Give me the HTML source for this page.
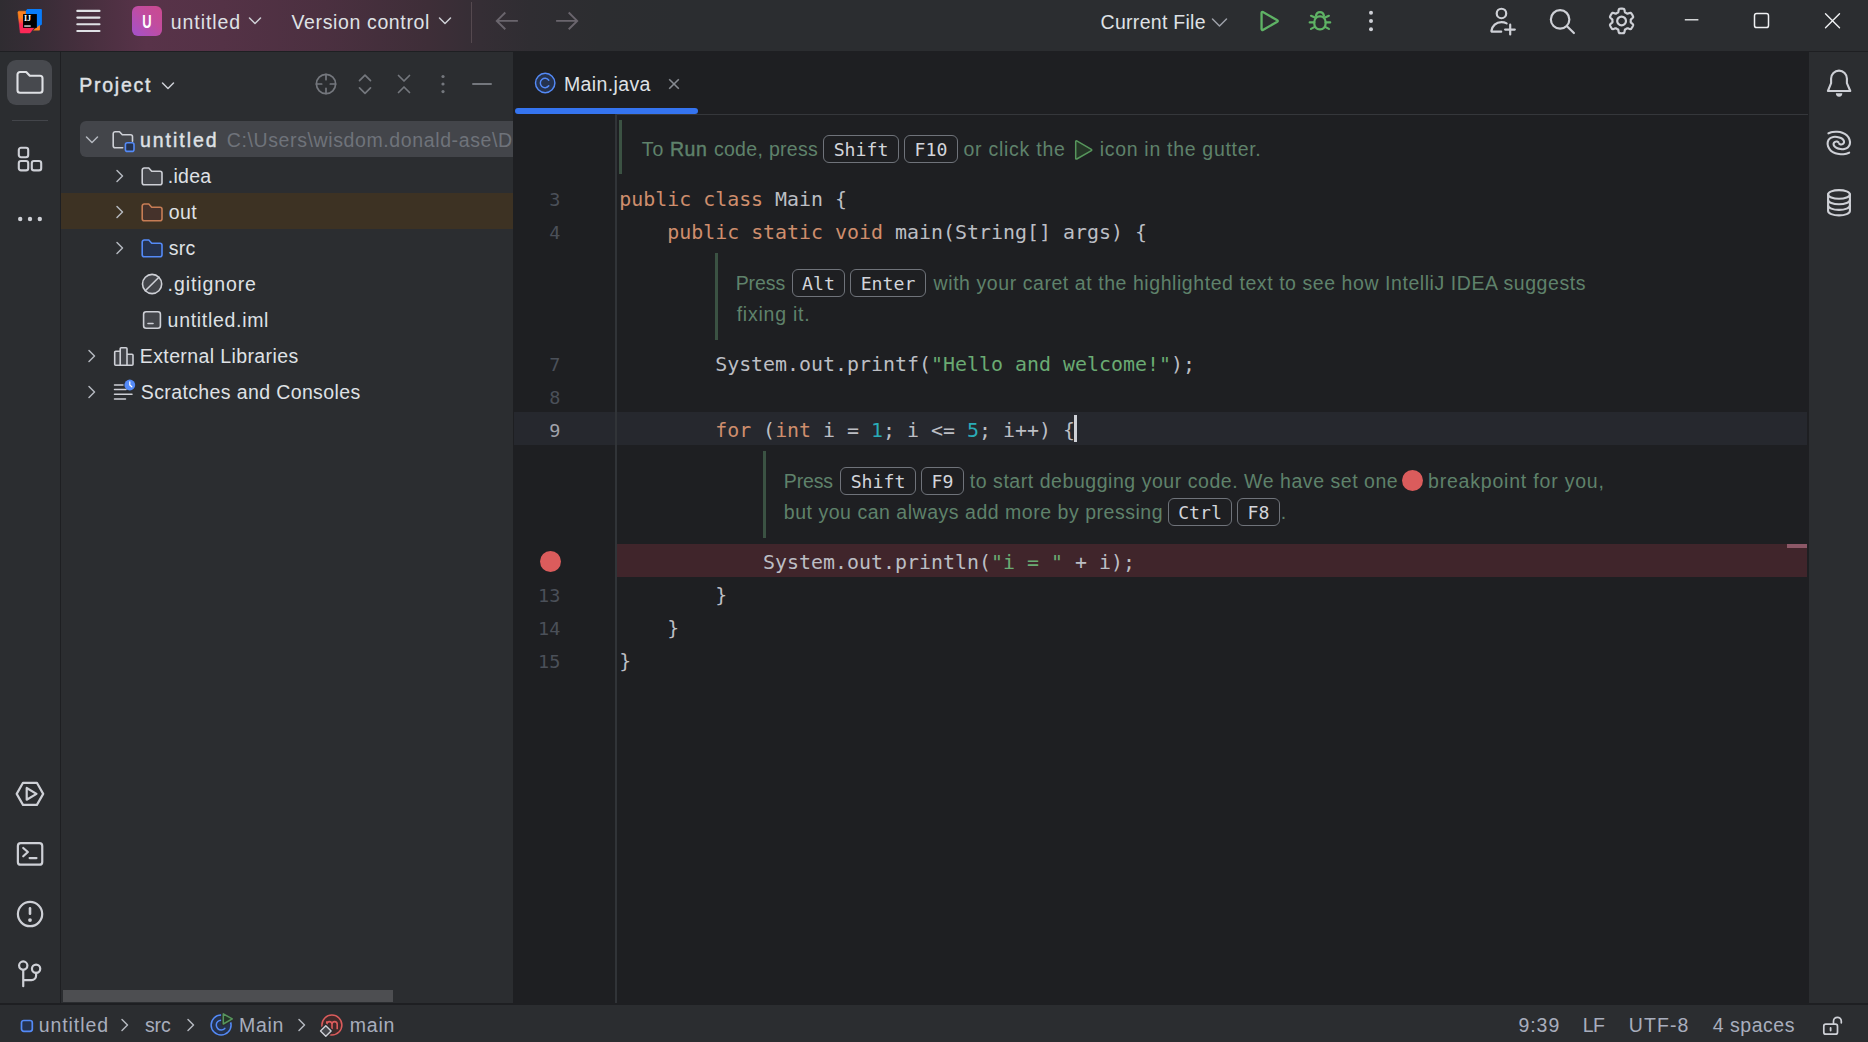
<!DOCTYPE html>
<html lang="en">
<head>
<meta charset="utf-8">
<title>untitled – Main.java</title>
<style>
*{box-sizing:border-box;margin:0;padding:0}
html,body{width:1868px;height:1042px;overflow:hidden;background:#1E1F22}
body{position:relative;font-family:"Liberation Sans",sans-serif;font-size:19.5px;color:#DFE1E5;-webkit-font-smoothing:antialiased}
.abs{position:absolute}
.t{position:absolute;white-space:pre;line-height:24px;height:24px}
svg{position:absolute;overflow:visible}
.ic{fill:none;stroke:#CED0D6;stroke-width:1.5;stroke-linecap:round;stroke-linejoin:round}
/* panels */
#titlebar{left:0;top:0;width:1868px;height:51px;background:#2B2D30}
#titlegrad{left:0;top:0;width:700px;height:51px;background:linear-gradient(90deg,#2F2C31 0px,#392D37 43px,#472F3E 86px,#583349 146px,#543246 223px,#4B3040 326px,#3E2E38 428px,#352E35 480px,#2F2D32 531px,#2C2D30 600px,#2B2D30 680px)}
#leftstrip{left:0;top:52px;width:60px;height:951px;background:#2B2D30}
#project{left:61px;top:52px;width:452px;height:951px;background:#2B2D30}
#rightstrip{left:1809px;top:52px;width:59px;height:951px;background:#2B2D30}
#statusbar{left:0;top:1005px;width:1868px;height:37px;background:#2B2D30}
#editor{left:514px;top:52px;width:1294px;height:951px;background:#1E1F22}
/* code */
.code{font-family:"DejaVu Sans Mono","Liberation Mono",monospace;font-size:19.93px;line-height:33px;height:33px;position:absolute;white-space:pre;color:#BCBEC4;left:619.2px;margin-top:0px}
.kw{color:#CF8E6D}.st{color:#6AAB73}.nu{color:#2AACB8}
.ln{font-family:"DejaVu Sans Mono","Liberation Mono",monospace;font-size:18.5px;line-height:33px;height:33px;position:absolute;color:#4B5059;text-align:right;width:40px;left:520.3px;margin-top:.5px}
.doc{position:absolute;white-space:pre;color:#5F826B;font-size:19.5px;line-height:31px;height:31px}
.kbd{position:absolute;text-align:center;font-family:"DejaVu Sans Mono","Liberation Mono",monospace;font-size:18.2px;color:#D3D5DB;border:1.5px solid #6F737A;border-radius:6px;height:28px;line-height:27.6px}
.docbar{position:absolute;width:3px;background:#3B5243}
.sb{color:#A8ADBD}
</style>
</head>
<body>
<!-- ===== panels ===== -->
<div class="abs" id="titlebar"></div>
<div class="abs" id="titlegrad"></div>
<div class="abs" id="leftstrip"></div>
<div class="abs" id="project"></div>
<div class="abs" id="editor"></div>
<div class="abs" id="rightstrip"></div>
<div class="abs" id="statusbar"></div>

<!-- ===== TITLEBAR ===== -->
<!--TITLEBAR-->
<!-- logo -->
<svg style="left:10px;top:1px" width="40" height="40" viewBox="10 1 40 40">
  <defs><linearGradient id="lgA" x1="0" y1="0" x2="0" y2="1"><stop offset="0" stop-color="#FC801D"/><stop offset=".3" stop-color="#FC801D"/><stop offset=".62" stop-color="#FE2857"/><stop offset="1" stop-color="#FE2857"/></linearGradient></defs>
  <path d="M27.300 9H41a.9 .9 0 0 1 .9.900V24.400L36.500 28 25.500 21V11z" fill="#087CFA"/>
  <path d="M18.700 11.200H25.500V27.500H34.200L30 32.900H20.300L17.900 12z" fill="url(#lgA)" stroke="url(#lgA)" stroke-width=".6" stroke-linejoin="round"/>
  <path d="M39.900 25V29.800a.8 .8 0 0 1-.8.800H33L36.500 27.500z" fill="#FC801D"/>
  <rect x="23.050" y="14.050" width="13.820" height="13.820" fill="#000"/>
  <text x="23.900" y="21" font-family="Liberation Serif, serif" font-size="8.200" font-weight="bold" fill="#fff" textLength="7.200" lengthAdjust="spacingAndGlyphs">IJ</text>
  <rect x="24.200" y="25.200" width="6.500" height="1.700" fill="#B8B8B8"/>
</svg>
<!-- hamburger -->
<svg style="left:68px;top:1px" width="40" height="40" viewBox="68 1 40 40" class="ic"><path d="M77.300 10.900H99.500M77.300 17.600H99.500M77.300 24.300H99.500M77.300 31.050H99.500" stroke="#DFE1E5" stroke-width="2.100"/></svg>
<!-- project badge -->
<div class="abs" style="left:132px;top:6px;width:30px;height:30px;border-radius:6px;background:linear-gradient(45deg,#A352CC 0%,#C24C9E 60%,#CB4A8E 100%)"></div>
<div class="t" id="tU" style="left:132px;top:10.300px;width:30px;text-align:center;color:#fff;font-size:19px;font-weight:bold;transform:scaleX(.68);transform-origin:14.700px 50%">U</div>
<div class="t" id="t_untitled" style="left:170.8px;letter-spacing:0.924px;top:10px">untitled</div>
<svg style="left:248px;top:16px" width="14" height="10" viewBox="0 0 14 10" class="ic"><path d="M1.5 2l5.5 5.5L12.5 2"/></svg>
<div class="t" id="t_vc" style="left:291.5px;letter-spacing:0.632px;top:10px">Version control</div>
<svg style="left:438px;top:16px" width="14" height="10" viewBox="0 0 14 10" class="ic"><path d="M1.5 2l5.5 5.5L12.5 2"/></svg>
<div class="abs" style="left:470.800px;top:1.500px;width:1.500px;height:41px;background:#55494F"></div>
<!-- back / forward -->
<svg style="left:480px;top:0px" width="120" height="44" viewBox="480 0 120 44" class="ic"><path d="M517.900 20.900H497M505.300 12.500L496.800 20.900 505.300 29.300M556.100 20.900H577M568.700 12.500L577.200 20.900 568.700 29.300" stroke="#6A656D" stroke-width="1.900" stroke-linecap="butt" stroke-linejoin="miter"/></svg>
<!-- current file -->
<div class="t" id="t_cf" style="left:1100.6px;letter-spacing:0.28px;top:10px">Current File</div>
<svg style="left:1211px;top:17px" width="17" height="11" viewBox="0 0 17 11" class="ic"><path d="M1.5 2l7 7 7-7" stroke="#9DA0A8"/></svg>
<!-- run -->
<svg style="left:1250px;top:1px" width="40" height="40" viewBox="1250 1 40 40" class="ic"><path d="M1261.560 12.900V29.100a.9 .9 0 0 0 1.350.780L1277.300 21.800a.9 .9 0 0 0 0-1.600L1262.910 12.120a.9 .9 0 0 0-1.350.780z" stroke="#5FB365" stroke-width="2.300"/></svg>
<!-- debug -->
<svg style="left:1300px;top:1px" width="40" height="40" viewBox="1300 1 40 40" class="ic"><g stroke="#5FB365" stroke-width="2.200"><rect x="1314.300" y="16.300" width="11.300" height="13.100" rx="5.300" ry="5.600"/><path d="M1315.900 16a4.100 4.700 0 0 1 8.100 0"/><path d="M1314.300 17.300L1311 15.800M1325.600 17.300L1328.900 15.800M1314.300 22.400H1309.700M1325.600 22.400H1330.200M1314.300 27.100L1311 28.900M1325.600 27.100L1328.900 28.900"/></g></svg>
<!-- more -->
<svg style="left:1366px;top:9px" width="10" height="24" viewBox="0 0 10 24"><circle cx="5" cy="3.800" r="2" fill="#CED0D6"/><circle cx="5" cy="12" r="2" fill="#CED0D6"/><circle cx="5" cy="20.200" r="2" fill="#CED0D6"/></svg>
<!-- code with me -->
<svg style="left:1482px;top:1px" width="40" height="40" viewBox="1482 1 40 40" class="ic"><g stroke-width="2.200"><circle cx="1501.460" cy="13.480" r="4.750"/><path d="M1506.600 23.400C1505 22.500 1503.300 22.100 1501.400 22.100 1496.200 22.100 1492 25.900 1491.400 31 1491.350 31.400 1491.650 31.700 1492.050 31.700H1501.200"/><path d="M1510.200 24.700V34.400M1505.100 29.600H1514.800"/></g></svg>
<!-- search -->
<svg style="left:1542px;top:1px" width="40" height="40" viewBox="1542 1 40 40" class="ic"><circle cx="1560.100" cy="19.400" r="9.250" stroke-width="2.200"/><path d="M1567 26.300L1573.900 33.050" stroke-width="2.200"/></svg>
<!-- settings -->
<svg style="left:1602px;top:1px" width="40" height="40" viewBox="-19.580 -19.960 40 40" class="ic"><path d="M9.20 0.00L9.20 0.24L9.19 0.48L9.17 0.72L9.15 0.96L9.13 1.20L9.26 1.47L9.56 1.77L9.98 2.12L10.45 2.51L10.91 2.92L11.29 3.34L11.53 3.75L11.59 4.10L11.48 4.41L11.36 4.71L11.24 5.00L11.10 5.30L10.96 5.58L10.81 5.87L10.65 6.15L10.49 6.43L10.32 6.70L10.14 6.97L9.95 7.23L9.76 7.49L9.56 7.74L9.35 7.98L9.01 8.12L8.54 8.10L7.99 7.99L7.40 7.80L6.83 7.59L6.32 7.40L5.90 7.28L5.60 7.30L5.41 7.44L5.21 7.58L5.01 7.72L4.81 7.84L4.60 7.97L4.39 8.09L4.18 8.20L3.96 8.30L3.74 8.40L3.52 8.50L3.36 8.75L3.25 9.17L3.15 9.71L3.05 10.31L2.92 10.91L2.75 11.45L2.52 11.86L2.24 12.09L1.92 12.15L1.61 12.19L1.29 12.23L0.97 12.26L0.64 12.28L0.32 12.30L0.00 12.30L-0.32 12.30L-0.64 12.28L-0.97 12.26L-1.29 12.23L-1.61 12.19L-1.92 12.15L-2.24 12.09L-2.52 11.86L-2.75 11.45L-2.92 10.91L-3.05 10.31L-3.15 9.71L-3.25 9.17L-3.36 8.75L-3.52 8.50L-3.74 8.40L-3.96 8.30L-4.18 8.20L-4.39 8.09L-4.60 7.97L-4.81 7.84L-5.01 7.72L-5.21 7.58L-5.41 7.44L-5.60 7.30L-5.90 7.28L-6.32 7.40L-6.83 7.59L-7.40 7.80L-7.99 7.99L-8.54 8.10L-9.01 8.12L-9.35 7.98L-9.56 7.74L-9.76 7.49L-9.95 7.23L-10.14 6.97L-10.32 6.70L-10.49 6.43L-10.65 6.15L-10.81 5.87L-10.96 5.58L-11.10 5.30L-11.24 5.00L-11.36 4.71L-11.48 4.41L-11.59 4.10L-11.53 3.75L-11.29 3.34L-10.91 2.92L-10.45 2.51L-9.98 2.12L-9.56 1.77L-9.26 1.47L-9.13 1.20L-9.15 0.96L-9.17 0.72L-9.19 0.48L-9.20 0.24L-9.20 0.00L-9.20 -0.24L-9.19 -0.48L-9.17 -0.72L-9.15 -0.96L-9.13 -1.20L-9.26 -1.47L-9.56 -1.77L-9.98 -2.12L-10.45 -2.51L-10.91 -2.92L-11.29 -3.34L-11.53 -3.75L-11.59 -4.10L-11.48 -4.41L-11.36 -4.71L-11.24 -5.00L-11.10 -5.30L-10.96 -5.58L-10.81 -5.87L-10.65 -6.15L-10.49 -6.43L-10.32 -6.70L-10.14 -6.97L-9.95 -7.23L-9.76 -7.49L-9.56 -7.74L-9.35 -7.98L-9.01 -8.12L-8.54 -8.10L-7.99 -7.99L-7.40 -7.80L-6.83 -7.59L-6.32 -7.40L-5.90 -7.28L-5.60 -7.30L-5.41 -7.44L-5.21 -7.58L-5.01 -7.72L-4.81 -7.84L-4.60 -7.97L-4.39 -8.09L-4.18 -8.20L-3.96 -8.30L-3.74 -8.40L-3.52 -8.50L-3.36 -8.75L-3.25 -9.17L-3.15 -9.71L-3.05 -10.31L-2.92 -10.91L-2.75 -11.45L-2.52 -11.86L-2.24 -12.09L-1.92 -12.15L-1.61 -12.19L-1.29 -12.23L-0.97 -12.26L-0.64 -12.28L-0.32 -12.30L-0.00 -12.30L0.32 -12.30L0.64 -12.28L0.97 -12.26L1.29 -12.23L1.61 -12.19L1.92 -12.15L2.24 -12.09L2.52 -11.86L2.75 -11.45L2.92 -10.91L3.05 -10.31L3.15 -9.71L3.25 -9.17L3.36 -8.75L3.52 -8.50L3.74 -8.40L3.96 -8.30L4.18 -8.20L4.39 -8.09L4.60 -7.97L4.81 -7.84L5.01 -7.72L5.21 -7.58L5.41 -7.44L5.60 -7.30L5.90 -7.28L6.32 -7.40L6.83 -7.59L7.40 -7.80L7.99 -7.99L8.54 -8.10L9.01 -8.12L9.35 -7.98L9.56 -7.74L9.76 -7.49L9.95 -7.23L10.14 -6.97L10.32 -6.70L10.49 -6.43L10.65 -6.15L10.81 -5.87L10.96 -5.58L11.10 -5.30L11.24 -5.00L11.36 -4.71L11.48 -4.41L11.59 -4.10L11.53 -3.75L11.29 -3.34L10.91 -2.92L10.45 -2.51L9.98 -2.12L9.56 -1.77L9.26 -1.47L9.13 -1.20L9.15 -0.96L9.17 -0.72L9.19 -0.48L9.20 -0.24Z" stroke-width="2.200"/><circle cx="0" cy="0" r="4.400" stroke-width="2.200"/></svg>
<!-- window controls -->
<svg style="left:1684px;top:12px" width="16" height="16" viewBox="0 0 16 16" class="ic"><path d="M.8 7.800h13.600" stroke="#F0F1F3" stroke-width="1.300" stroke-linecap="butt"/></svg>
<svg style="left:1753px;top:12px" width="17" height="17" viewBox="0 0 17 17" class="ic"><rect x="1.500" y="1.600" width="14" height="14" rx="2.200" stroke="#F0F1F3" stroke-width="1.500"/></svg>
<svg style="left:1824px;top:12px" width="17" height="17" viewBox="0 0 17 17" class="ic"><path d="M1.500 1.700l14 14M15.500 1.700l-14 14" stroke="#F0F1F3" stroke-width="1.400"/></svg>
<!--/TITLEBAR-->

<!-- ===== LEFT STRIP ===== -->
<!--LEFTSTRIP-->
<div class="abs" style="left:7px;top:60px;width:45px;height:45px;border-radius:9px;background:#47494E"></div>
<svg style="left:16px;top:70px" width="28" height="25" viewBox="0 0 28 25" class="ic"><path d="M1.500 4.500a2.500 2.500 0 0 1 2.500-2.500h6.200l3.600 3.800h10.200a2.500 2.500 0 0 1 2.500 2.500v12a2.500 2.500 0 0 1-2.500 2.500H4a2.500 2.500 0 0 1-2.500-2.500z" stroke-width="2.100" stroke="#DFE1E5"/></svg>
<div class="abs" style="left:12px;top:120px;width:36px;height:1px;background:#43454A"></div>
<!-- structure -->
<svg style="left:17px;top:146px" width="26" height="26" viewBox="0 0 26 26" class="ic"><rect x="1.800" y="1.800" width="9.400" height="9.400" rx="2.200" stroke-width="2.100"/><rect x="1.800" y="15" width="9.400" height="9.400" rx="2.200" stroke-width="2.100"/><rect x="14.800" y="15" width="9.400" height="9.400" rx="2.200" stroke-width="2.100"/></svg>
<!-- more -->
<svg style="left:17px;top:215px" width="26" height="8" viewBox="0 0 26 8"><circle cx="3.200" cy="4" r="2.200" fill="#CED0D6"/><circle cx="13" cy="4" r="2.200" fill="#CED0D6"/><circle cx="22.800" cy="4" r="2.200" fill="#CED0D6"/></svg>
<!-- services -->
<svg style="left:10px;top:774px" width="40" height="40" viewBox="10 774 40 40" class="ic"><path d="M23 782.800H36.900L43.200 793.900 36.900 804.900H23L16.700 793.900z" stroke-width="2.200"/><path d="M26.700 788V799.700L36.500 793.900z" stroke-width="2.200"/></svg>
<!-- terminal -->
<svg style="left:10px;top:834px" width="40" height="40" viewBox="10 834 40 40" class="ic"><rect x="17.870" y="843.200" width="24.380" height="21.500" rx="2.800" stroke-width="2.200"/><path d="M23.240 848L27.850 852 23.240 856.300M29.600 858.100H36.500" stroke-width="2.200"/></svg>
<!-- problems -->
<svg style="left:10px;top:894px" width="40" height="40" viewBox="10 894 40 40" class="ic"><circle cx="30.060" cy="914.050" r="12.150" stroke-width="2.200"/><path d="M30 908.400V913.800" stroke-width="2.600"/><circle cx="30" cy="920.100" r="1.900" fill="#CED0D6" stroke="none"/></svg>
<!-- git -->
<svg style="left:10px;top:954px" width="40" height="40" viewBox="10 954 40 40" class="ic"><circle cx="23.240" cy="965.600" r="4.150" stroke-width="2.200"/><circle cx="36.100" cy="968.700" r="4.150" stroke-width="2.200"/><path d="M23.240 969.800V986.200M23.240 980.100H31.500a4.600 4.600 0 0 0 4.600-4.600V972.900" stroke-width="2.200"/></svg>
<!--/LEFTSTRIP-->

<!-- ===== PROJECT ===== -->
<!--PROJECT-->
<div class="t" id="t_project" style="left:79.3px;letter-spacing:1.738px;top:72.700px;-webkit-text-stroke:.42px #DFE1E5;">Project</div>
<svg style="left:161px;top:81px" width="14" height="10" viewBox="0 0 14 10" class="ic"><path d="M1.500 2l5.500 5.500L12.500 2"/></svg>
<!-- header icons -->
<svg style="left:314px;top:72px" width="24" height="24" viewBox="0 0 24 24" class="ic"><g stroke="#74777D" stroke-width="1.700"><circle cx="12" cy="12" r="9.600"/><path d="M12 2.400v5.300M12 21.600v-5.300M2.400 12h5.300M21.600 12h-5.300"/></g></svg>
<svg style="left:358px;top:73px" width="14" height="22" viewBox="0 0 14 22" class="ic"><path d="M1.500 7.700L7 2.200l5.500 5.500M1.500 14.800L7 20.300l5.500-5.500" stroke="#74777D" stroke-width="1.700"/></svg>
<svg style="left:397px;top:73px" width="14" height="22" viewBox="0 0 14 22" class="ic"><path d="M1.500 2.500L7 8l5.500-5.500M1.500 19.500L7 14l5.500 5.500" stroke="#74777D" stroke-width="1.700"/></svg>
<svg style="left:440px;top:73px" width="6" height="22" viewBox="0 0 6 22"><circle cx="3" cy="3.500" r="1.600" fill="#74777D"/><circle cx="3" cy="11" r="1.600" fill="#74777D"/><circle cx="3" cy="18.600" r="1.600" fill="#74777D"/></svg>
<div class="abs" style="left:472px;top:83.200px;width:19.500px;height:1.600px;background:#74777D;border-radius:1px"></div>
<!-- rows -->
<div class="abs" style="left:80px;top:121px;width:433px;height:36px;background:#43454A;border-radius:6px 0 0 6px"></div>
<div class="abs" style="left:61px;top:193px;width:452px;height:36px;background:#3D3223"></div>
<!-- row1 untitled -->
<svg style="left:85px;top:135px" width="14" height="10" viewBox="0 0 14 10" class="ic"><path d="M1.500 2l5.500 5.500L12.500 2" stroke="#B4B8BF"/></svg>
<svg style="left:112px;top:130px" width="24" height="23" viewBox="0 0 24 23" class="ic"><path d="M1.200 3.700a2 2 0 0 1 2-2h4.300l2.800 3h8.200a2 2 0 0 1 2 2v4.500M1.200 3.700v12.100a2 2 0 0 0 2 2h7.500" stroke-width="1.600"/><rect x="13.400" y="12.800" width="8.600" height="8.600" rx="2" fill="#25324D" stroke="#548AF7" stroke-width="1.600"/></svg>
<div class="t" id="t_r1" style="left:139.9px;letter-spacing:1.981px;top:127.8px;-webkit-text-stroke:.42px #DFE1E5">untitled</div>
<div class="t" id="t_r1p" style="left:226.8px;letter-spacing:0.612px;top:127.8px;color:#6F737A;width:286px;overflow:hidden">C:\Users\wisdom.donald-ase\Desktop</div>
<!-- row2 .idea -->
<svg style="left:115px;top:169px" width="10" height="14" viewBox="0 0 10 14" class="ic"><path d="M2 1.500l5.500 5.500L2 12.500" stroke="#B4B8BF"/></svg>
<svg style="left:140px;top:166px" width="24" height="20" viewBox="0 0 24 20" class="ic"><path d="M2.200 4a2 2 0 0 1 2-2h4.600l2.900 3.200h8.300a2 2 0 0 1 2 2v9.600a2 2 0 0 1-2 2H4.200a2 2 0 0 1-2-2z" fill="#43454A" stroke-width="1.600"/></svg>
<div class="t" id="t_r2" style="left:167.8px;letter-spacing:0.265px;top:164.0px">.idea</div>
<!-- row3 out -->
<svg style="left:115px;top:205px" width="10" height="14" viewBox="0 0 10 14" class="ic"><path d="M2 1.500l5.500 5.500L2 12.500" stroke="#B4B8BF"/></svg>
<svg style="left:140px;top:202px" width="24" height="20" viewBox="0 0 24 20" class="ic"><path d="M2.200 4a2 2 0 0 1 2-2h4.600l2.900 3.200h8.300a2 2 0 0 1 2 2v9.600a2 2 0 0 1-2 2H4.200a2 2 0 0 1-2-2z" fill="#45322B" stroke="#C77D55" stroke-width="1.600"/></svg>
<div class="t" id="t_r3" style="left:168.8px;letter-spacing:0.405px;top:200.0px">out</div>
<!-- row4 src -->
<svg style="left:115px;top:241px" width="10" height="14" viewBox="0 0 10 14" class="ic"><path d="M2 1.500l5.500 5.500L2 12.500" stroke="#B4B8BF"/></svg>
<svg style="left:140px;top:238px" width="24" height="20" viewBox="0 0 24 20" class="ic"><path d="M2.200 4a2 2 0 0 1 2-2h4.600l2.900 3.200h8.300a2 2 0 0 1 2 2v9.600a2 2 0 0 1-2 2H4.200a2 2 0 0 1-2-2z" fill="#25324D" stroke="#548AF7" stroke-width="1.600"/></svg>
<div class="t" id="t_r4" style="left:168.8px;letter-spacing:0.228px;top:236.0px">src</div>
<!-- row5 .gitignore -->
<svg style="left:141px;top:273px" width="22" height="22" viewBox="0 0 22 22" class="ic"><circle cx="11.100" cy="11" r="9.600" fill="#43454A" stroke-width="1.600"/><path d="M4.300 17.800L17.900 4.200" stroke-width="1.600"/></svg>
<div class="t" id="t_r5" style="left:167.6px;letter-spacing:0.903px;top:272.0px">.gitignore</div>
<!-- row6 untitled.iml -->
<svg style="left:142px;top:310px" width="20" height="20" viewBox="0 0 20 20" class="ic"><rect x="1.600" y="1.800" width="16.800" height="16.400" rx="2.500" fill="#43454A" stroke-width="1.600"/><path d="M6 13.500h5" stroke-width="1.600"/></svg>
<div class="t" id="t_r6" style="left:167.6px;letter-spacing:0.693px;top:308.0px">untitled.iml</div>
<!-- row7 External Libraries -->
<svg style="left:87px;top:349px" width="10" height="14" viewBox="0 0 10 14" class="ic"><path d="M2 1.500l5.500 5.500L2 12.500" stroke="#B4B8BF"/></svg>
<svg style="left:113px;top:346px" width="22" height="20" viewBox="0 0 22 20" class="ic"><path d="M1.700 18.200V6.300a1 1 0 0 1 1-1h4.500V2.700a1 1 0 0 1 1-1h4.800a1 1 0 0 1 1 1v5.500h5a1 1 0 0 1 1 1v9a1 1 0 0 1-1 1H2.700a1 1 0 0 1-1-1zM7.200 5.300v13.900M14 8.200v11" fill="#43454A" stroke-width="1.600"/></svg>
<div class="t" id="t_r7" style="left:139.8px;letter-spacing:0.389px;top:344.0px">External Libraries</div>
<!-- row8 Scratches -->
<svg style="left:87px;top:385px" width="10" height="14" viewBox="0 0 10 14" class="ic"><path d="M2 1.500l5.500 5.500L2 12.500" stroke="#B4B8BF"/></svg>
<svg style="left:113px;top:378px" width="24" height="24" viewBox="0 0 24 24" class="ic"><path d="M1.500 7h8.500M1.500 11.600h11.500M1.500 16.200h17.500M1.500 21h11" stroke-width="1.500"/><circle cx="16.800" cy="7" r="5.400" fill="#548AF7" stroke="none"/><path d="M16.800 3.800V7l2 1.800" stroke="#fff" stroke-width="1.200"/></svg>
<div class="t" id="t_r8" style="left:140.8px;letter-spacing:0.38px;top:380.0px">Scratches and Consoles</div>
<!-- scrollbar -->
<div class="abs" style="left:63px;top:990px;width:330px;height:12px;background:#4D4E51"></div>
<!--/PROJECT-->

<!-- ===== EDITOR ===== -->
<!--EDITOR-->
<!-- tab -->
<svg style="left:534px;top:72px" width="22" height="22" viewBox="0 0 22 22"><circle cx="11.200" cy="11" r="9.700" fill="#25324D" stroke="#548AF7" stroke-width="1.450"/><path d="M14.800 8.200a4.700 4.700 0 1 0 0 5.600" fill="none" stroke="#548AF7" stroke-width="1.450" stroke-linecap="round"/></svg>
<div class="t" id="t_tab" style="left:564px;letter-spacing:0.361px;top:71.600px">Main.java</div>
<svg style="left:668px;top:77.500px" width="12" height="12" viewBox="0 0 12 12" class="ic"><path d="M1.200 1.200l9.600 9.600M10.800 1.200L1.200 10.800" stroke="#868A91" stroke-width="1.600" stroke-linecap="butt"/></svg>
<div class="abs" style="left:617px;top:113.800px;width:1191px;height:1.200px;background:#35373B"></div>
<div class="abs" style="left:514.500px;top:108px;width:183.500px;height:6px;border-radius:3px;background:#3574F0"></div>
<!-- line highlights -->
<div class="abs" style="left:514px;top:412px;width:1293px;height:33px;background:#26282E"></div>
<div class="abs" style="left:617px;top:544px;width:1190px;height:33px;background:#40252B"></div>
<div class="abs" style="left:615px;top:114px;width:2px;height:889px;background:#313438"></div>
<div class="abs" style="left:1787px;top:544.400px;width:20px;height:3.200px;background:#8C5867"></div>
<!-- line numbers -->
<div class="ln" style="top:182.500px">3</div>
<div class="ln" style="top:215.500px">4</div>
<div class="ln" style="top:347.500px">7</div>
<div class="ln" style="top:380.500px">8</div>
<div class="ln" style="top:413.500px;color:#A1A3AB">9</div>
<div class="ln" style="top:578.500px">13</div>
<div class="ln" style="top:611.500px">14</div>
<div class="ln" style="top:644.500px">15</div>
<div class="abs" style="left:540px;top:551px;width:21px;height:21px;border-radius:50%;background:#DB5C5C"></div>
<!-- code -->
<div class="code" style="top:182.500px"><span class="kw">public class</span> Main {</div>
<div class="code" style="top:215.500px">    <span class="kw">public static void</span> main(String[] args) {</div>
<div class="code" style="top:347.500px">        System.out.printf(<span class="st">"Hello and welcome!"</span>);</div>
<div class="code" style="top:413.500px">        <span class="kw">for</span> (<span class="kw">int</span> i = <span class="nu">1</span>; i &lt;= <span class="nu">5</span>; i++) {</div>
<div class="code" style="top:545.500px">            System.out.println(<span class="st">"i = "</span> + i);</div>
<div class="code" style="top:578.500px">        }</div>
<div class="code" style="top:611.500px">    }</div>
<div class="code" style="top:644.500px">}</div>
<div class="abs" style="left:1074px;top:414.500px;width:3px;height:27.500px;background:#CED0D6"></div>
<!-- doc block 1 -->
<div class="docbar" style="left:619px;top:119.800px;height:54.700px"></div>
<div class="doc" id="d1a" style="left:641.7px;letter-spacing:1.05px;top:133.500px">To </div>
<div class="doc" id="d1b" style="left:670px;letter-spacing:0.536px;top:133.500px;-webkit-text-stroke:.42px #5F826B">Run</div>
<div class="doc" id="d1c" style="left:713.9px;letter-spacing:0.315px;top:133.500px">code, press</div>
<div class="kbd" style="left:823.1px;top:135px;width:75.9px">Shift</div>
<div class="kbd" style="left:904.1px;top:135px;width:53.9px">F10</div>
<div class="doc" id="d1d" style="left:963.5px;letter-spacing:0.741px;top:133.500px">or click the</div>
<svg style="left:1070px;top:135px" width="30" height="30" viewBox="1070 135 30 30" class="ic"><path d="M1075.700 141.500V158.400a.7 .7 0 0 0 1.050.600L1091.400 150.550a.7 .7 0 0 0 0-1.200L1076.750 140.900a.7 .7 0 0 0-1.050.600z" fill="#253627" stroke="#57965C" stroke-width="1.500"/></svg>
<div class="doc" id="d1e" style="left:1099.7px;letter-spacing:0.695px;top:133.500px">icon in the gutter.</div>
<!-- doc block 2 -->
<div class="docbar" style="left:715px;top:253px;height:86.500px"></div>
<div class="doc" id="d2a" style="left:735.7px;letter-spacing:-0.099px;top:267.500px">Press</div>
<div class="kbd" style="left:792.1px;top:269px;width:52.9px">Alt</div>
<div class="kbd" style="left:850.1px;top:269px;width:75.9px">Enter</div>
<div class="doc" id="d2b" style="left:933.6px;letter-spacing:0.563px;top:267.500px">with your caret at the highlighted text to see how IntelliJ IDEA suggests</div>
<div class="doc" id="d2c" style="left:736.7px;letter-spacing:0.768px;top:298.500px">fixing it.</div>
<!-- doc block 3 -->
<div class="docbar" style="left:763px;top:451px;height:86.500px"></div>
<div class="doc" id="d3a" style="left:783.8px;letter-spacing:-0.149px;top:465.500px">Press</div>
<div class="kbd" style="left:840.1px;top:467px;width:75.9px">Shift</div>
<div class="kbd" style="left:921.1px;top:467px;width:42.9px">F9</div>
<div class="doc" id="d3b" style="left:969.8px;letter-spacing:0.544px;top:465.500px">to start debugging your code. We have set one</div>
<div class="abs" style="left:1401.500px;top:470px;width:21px;height:21px;border-radius:50%;background:#DB5C5C"></div>
<div class="doc" id="d3c" style="left:1428px;letter-spacing:0.8px;top:465.500px">breakpoint for you,</div>
<div class="doc" id="d3d" style="left:783.8px;letter-spacing:0.525px;top:496.500px">but you can always add more by pressing</div>
<div class="kbd" style="left:1168.1px;top:498px;width:63.9px">Ctrl</div>
<div class="kbd" style="left:1237.1px;top:498px;width:42.9px">F8</div>
<div class="doc" id="d3e" style="left:1280.800px;top:496.500px">.</div>
<!--/EDITOR-->

<!-- ===== RIGHT STRIP ===== -->
<!--RIGHTSTRIP-->
<!-- bell -->
<svg style="left:1820px;top:62px" width="40" height="40" viewBox="1820 62 40 40" class="ic"><path d="M1831.100 83.100V78.500a7.900 7.900 0 0 1 15.800 0V83.100L1850.300 91H1827.900z" stroke-width="2.100"/><path d="M1835.900 93.300h6.400a3.200 3.400 0 0 1-6.400 0z" fill="#CED0D6" stroke="none"/></svg>
<!-- ai -->
<svg style="left:1826px;top:130px" width="26" height="26" viewBox="-12.800 -13 26 26" class="ic"><path d="M-10.36 -9.67C-9.67 -9.89 -7.66 -10.73 -6.22 -10.98C-4.78 -11.24 -3.34 -11.33 -1.73 -11.23C-0.12 -11.12 1.84 -10.94 3.45 -10.36C5.07 -9.79 6.74 -8.92 7.94 -7.77C9.15 -6.62 10.19 -4.92 10.71 -3.45C11.23 -1.99 11.34 -0.29 11.05 1.04C10.77 2.36 9.90 3.66 8.98 4.49C8.06 5.33 6.74 5.79 5.53 6.04C4.32 6.30 2.99 6.22 1.73 6.04C0.46 5.87 -1.01 5.53 -2.07 5.01C-3.14 4.49 -4.15 3.68 -4.66 2.94C-5.18 2.19 -5.33 1.21 -5.18 0.52C-5.04 -0.17 -4.38 -0.88 -3.80 -1.21C-3.22 -1.54 -2.29 -1.53 -1.73 -1.45C-1.16 -1.38 -0.63 -0.88 -0.41 -0.76" stroke-width="2.100"/><path d="M10.36 9.67C9.67 9.89 7.66 10.73 6.22 10.98C4.78 11.24 3.34 11.33 1.73 11.23C0.12 11.12 -1.84 10.94 -3.45 10.36C-5.07 9.79 -6.74 8.92 -7.94 7.77C-9.15 6.62 -10.19 4.92 -10.71 3.45C-11.23 1.99 -11.34 0.29 -11.05 -1.04C-10.77 -2.36 -9.90 -3.66 -8.98 -4.49C-8.06 -5.33 -6.74 -5.79 -5.53 -6.04C-4.32 -6.30 -2.99 -6.22 -1.73 -6.04C-0.46 -5.87 1.01 -5.53 2.07 -5.01C3.14 -4.49 4.15 -3.68 4.66 -2.94C5.18 -2.19 5.33 -1.21 5.18 -0.52C5.04 0.17 4.38 0.88 3.80 1.21C3.22 1.54 2.29 1.53 1.73 1.45C1.16 1.38 0.63 0.88 0.41 0.76" stroke-width="2.100"/></svg>
<!-- database -->
<svg style="left:1820px;top:183px" width="40" height="40" viewBox="1820 183 40 40" class="ic"><g stroke-width="2.100"><ellipse cx="1839" cy="194.400" rx="10.900" ry="4.300"/><path d="M1828.100 194.400V211.100a10.900 4.300 0 0 0 21.800 0V194.400"/><path d="M1828.100 200a10.900 4.300 0 0 0 21.800 0M1828.100 205.600a10.900 4.300 0 0 0 21.800 0"/></g></svg>
<!--/RIGHTSTRIP-->

<!-- ===== STATUS BAR ===== -->
<!--STATUSBAR-->
<svg style="left:20px;top:1019px" width="14" height="14" viewBox="0 0 14 14"><rect x="1.500" y="1.500" width="10.800" height="10.800" rx="2.300" fill="#25324D" stroke="#548AF7" stroke-width="1.700"/></svg>
<div class="t sb" id="s_b1" style="left:38.7px;letter-spacing:0.924px;top:1013px">untitled</div>
<svg style="left:120px;top:1018.300px" width="10" height="14" viewBox="0 0 10 14" class="ic"><path d="M2 1.500l5.500 5.500L2 12.500" stroke="#B4B8BF"/></svg>
<div class="t sb" id="s_b2" style="left:144.9px;letter-spacing:-0.072px;top:1013px">src</div>
<svg style="left:186px;top:1018.300px" width="10" height="14" viewBox="0 0 10 14" class="ic"><path d="M2 1.500l5.500 5.500L2 12.500" stroke="#B4B8BF"/></svg>
<svg style="left:205px;top:1008px" width="34" height="34" viewBox="205 1008 34 34"><circle cx="221.100" cy="1025" r="10" fill="#25324D" stroke="#548AF7" stroke-width="1.500"/><path d="M224.800 1021.800a4.900 4.900 0 1 0 0 6.600" fill="none" stroke="#548AF7" stroke-width="1.500" stroke-linecap="round"/><path d="M223.300 1013.900V1024L232.300 1018.950z" fill="#2B2D30" stroke="#2B2D30" stroke-width="4.400" stroke-linejoin="round"/><path d="M223.300 1013.900V1024L232.300 1018.950z" fill="#253627" stroke="#57965C" stroke-width="1.500" stroke-linejoin="round"/></svg>
<div class="t sb" id="s_b3" style="left:239px;letter-spacing:0.726px;top:1013px">Main</div>
<svg style="left:297px;top:1018.300px" width="10" height="14" viewBox="0 0 10 14" class="ic"><path d="M2 1.500l5.500 5.500L2 12.500" stroke="#B4B8BF"/></svg>
<svg style="left:315px;top:1008px" width="34" height="34" viewBox="315 1008 34 34"><circle cx="331.900" cy="1025" r="10" fill="#402929" stroke="#DB5C5C" stroke-width="1.500"/><path d="M326.800 1029.200V1021.300M326.800 1024.300c0-3.600 5.200-3.600 5.200 0V1029.200M332 1024.300c0-3.600 5.200-3.600 5.200 0V1029.200" fill="none" stroke="#DB5C5C" stroke-width="1.600" stroke-linecap="butt"/><path d="M325.800 1025.300l5.700 5.700-5.700 5.700-5.700-5.700z" fill="#2B2D30" stroke="#2B2D30" stroke-width="3.400" stroke-linejoin="round"/><path d="M325.800 1025.700l5.300 5.300-5.300 5.300-5.300-5.300z" fill="#43454A" stroke="#CED0D6" stroke-width="1.400" stroke-linejoin="round"/></svg>
<div class="t sb" id="s_b4" style="left:349.7px;letter-spacing:0.826px;top:1013px">main</div>
<div class="t sb" id="s_r1" style="left:1518.5px;letter-spacing:0.931px;top:1013px">9:39</div>
<div class="t sb" id="s_r2" style="left:1582.7px;letter-spacing:-0.545px;top:1013px">LF</div>
<div class="t sb" id="s_r3" style="left:1628.8px;letter-spacing:1.075px;top:1013px">UTF-8</div>
<div class="t sb" id="s_r4" style="left:1712.8px;letter-spacing:0.515px;top:1013px">4 spaces</div>
<svg style="left:1822px;top:1016px" width="22" height="20" viewBox="0 0 22 20" class="ic"><rect x="1.800" y="8.200" width="13.700" height="10" rx="2" stroke-width="1.700"/><path d="M8.600 12v2.500" stroke-width="1.800"/><path d="M11.500 8V5.200a3.900 3.900 0 0 1 7.800 0V6.800" stroke-width="1.700"/></svg>
<!--/STATUSBAR-->
</body>
</html>
